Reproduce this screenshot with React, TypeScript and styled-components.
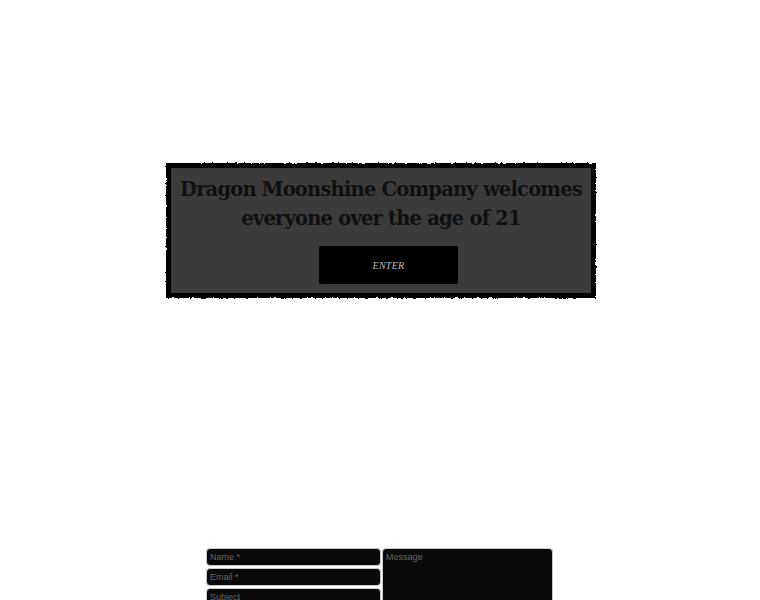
import React from "react";
import styled, { createGlobalStyle } from "styled-components";

const Global = createGlobalStyle`
  html, body { margin: 0; padding: 0; background: #ffffff; }
  body { font-family: "Liberation Sans", Arial, sans-serif; overflow: hidden; }
`;

const Page = styled.div`
  width: 760px;
  height: 600px;
  display: flex;
  flex-direction: column;
  align-items: center;
  overflow: hidden;
`;

const Gate = styled.section`
  flex-shrink: 0;
  margin-top: 163px;
  margin-left: 2px;
  width: 430px;
  height: 135px;
  position: relative;
  padding: 5px;
  box-sizing: border-box;
  display: flex;

  &::before {
    content: "";
    position: absolute;
    inset: 0;
    background: #050505;
    filter: url(#rough);
    z-index: 0;
  }
`;

const Panel = styled.div`
  position: relative;
  z-index: 1;
  flex: 1;
  background: #3b3b3b;
  display: flex;
  flex-direction: column;
  align-items: center;
  padding-top: 7px;
  box-sizing: border-box;
`;

const Heading = styled.h1`
  margin: 0;
  font-family: "DejaVu Serif", "Liberation Serif", serif;
  font-weight: bold;
  font-size: 19.5px;
  line-height: 29px;
  letter-spacing: -0.8px;
  color: #101010;
  text-align: center;
  white-space: nowrap;
`;

const EnterButton = styled.button`
  margin-top: 13px;
  margin-left: 15px;
  width: 139px;
  height: 38px;
  flex-shrink: 0;
  background: #000000;
  border: none;
  border-radius: 2px;
  color: #b8b8b8;
  font-family: "Liberation Serif", "Times New Roman", serif;
  font-style: italic;
  font-size: 10px;
  letter-spacing: 0.3px;
  cursor: pointer;
`;

const Form = styled.form`
  flex-shrink: 0;
  margin-top: 250px;
  margin-right: 1px;
  display: grid;
  grid-template-columns: 175px 171px;
  column-gap: 1px;
  align-items: start;
`;

const Column = styled.div`
  display: flex;
  flex-direction: column;
  gap: 2px;
`;

const Field = styled.input`
  box-sizing: border-box;
  width: 175px;
  height: 18px;
  background: #0a0a0a;
  border: 1px solid #c9c9c9;
  border-radius: 4px;
  padding: 0 3px;
  color: #ddd;
  font-family: "Liberation Sans", Arial, sans-serif;
  font-size: 9px;
  outline: none;
  &::placeholder { color: #666666; }
`;

const Message = styled.textarea`
  box-sizing: border-box;
  width: 171px;
  height: 120px;
  background: #0a0a0a;
  border: 1px solid #c9c9c9;
  border-radius: 4px;
  padding: 3px 3px;
  color: #ddd;
  font-family: "Liberation Sans", Arial, sans-serif;
  font-size: 9px;
  resize: none;
  outline: none;
  &::placeholder { color: #666666; }
`;

const Defs = styled.svg`
  width: 0;
  height: 0;
  position: absolute;
`;

export default function App() {
  return (
    <Page>
      <Global />
      <Defs aria-hidden="true">
        <filter id="rough">
          <feTurbulence type="fractalNoise" baseFrequency="0.35" numOctaves="2" seed="3" />
          <feDisplacementMap in="SourceGraphic" scale="3" />
        </filter>
      </Defs>
      <Gate>
        <Panel>
          <Heading>
            Dragon Moonshine Company welcomes
            <br />
            everyone over the age of 21
          </Heading>
          <EnterButton type="button">ENTER</EnterButton>
        </Panel>
      </Gate>
      <Form onSubmit={(e) => e.preventDefault()}>
        <Column>
          <Field placeholder="Name *" />
          <Field placeholder="Email *" />
          <Field placeholder="Subject" />
        </Column>
        <Message placeholder="Message" />
      </Form>
    </Page>
  );
}
